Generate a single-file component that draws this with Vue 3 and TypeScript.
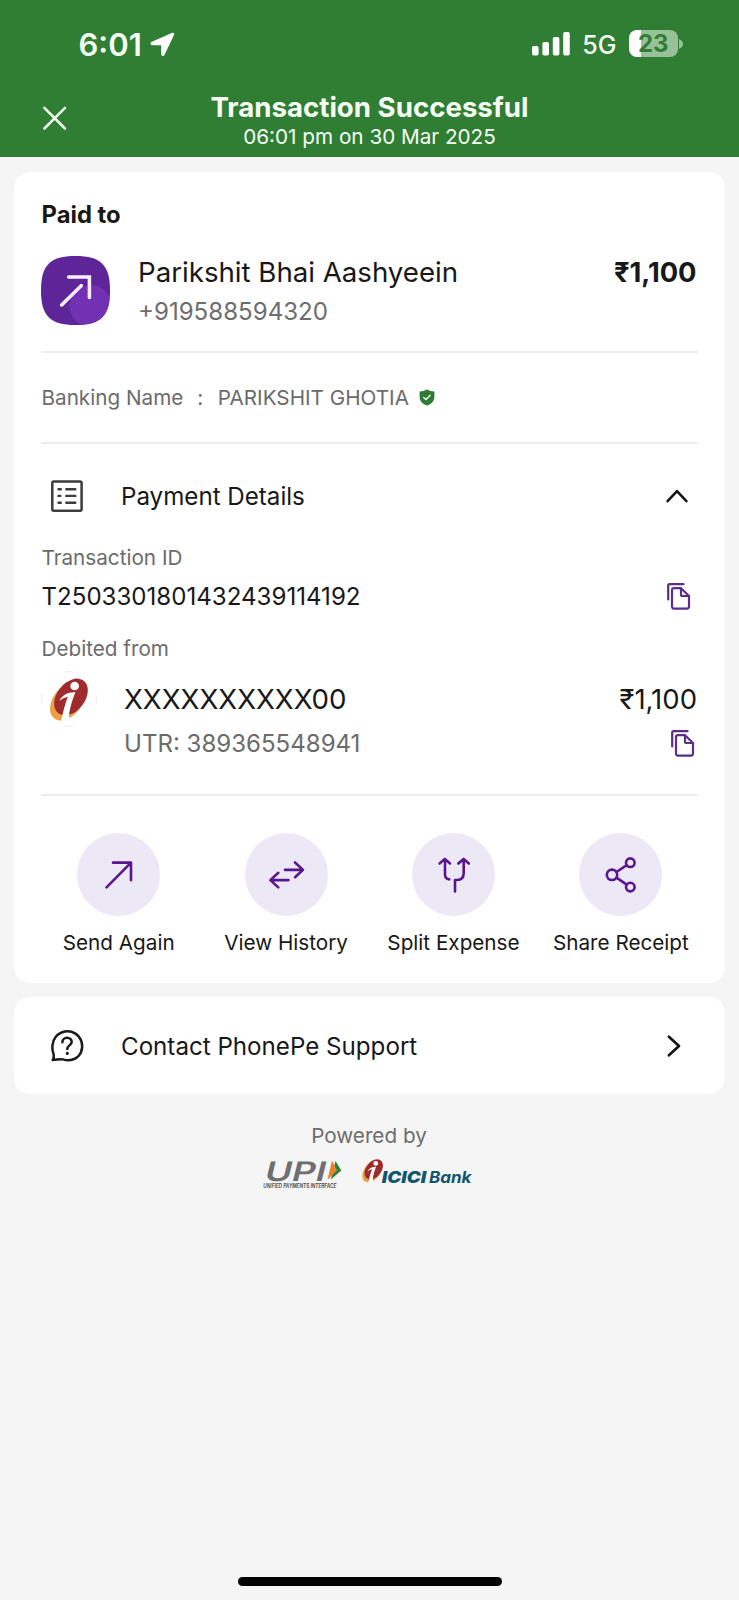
<script setup lang="ts">
type ActionIcon = 'send' | 'history' | 'split' | 'share'

interface Action {
  label: string
  icon: ActionIcon
}

const actions: Action[] = [
  { label: 'Send Again', icon: 'send' },
  { label: 'View History', icon: 'history' },
  { label: 'Split Expense', icon: 'split' },
  { label: 'Share Receipt', icon: 'share' },
]

const payment = {
  payee: 'Parikshit Bhai Aashyeein',
  phone: '+919588594320',
  amount: '₹1,100',
  bankingName: 'PARIKSHIT GHOTIA',
  transactionId: 'T2503301801432439114192',
  account: 'XXXXXXXXXX00',
  utr: '389365548941',
}
</script>

<template>
  <div class="screen">
    <svg class="defs" width="0" height="0" aria-hidden="true">
      <defs>
        <g id="bank-mark">
          <ellipse cx="204" cy="722" rx="43" ry="66" transform="rotate(38 204 722)" fill="#ec9f43" />
          <ellipse cx="214" cy="710" rx="42" ry="62" transform="rotate(38 214 710)" fill="#9f2b2c" />
          <path d="M179 721C188 705 204 695 227 696C220 716 210 740 208 769L213 784H184C190 756 197 726 205 709C196 711 187 715 179 721Z" fill="#fff" />
          <circle cx="225" cy="677" r="13" fill="#fff" />
        </g>
        <g id="copy-mark" fill="none" stroke="#5b2d8c" stroke-width="2.200" stroke-linecap="round" stroke-linejoin="round">
          <path d="M1.200 16.500V2.600Q1.200 1.200 2.600 1.200H16.500" />
          <path d="M7 5.200H14L22 13V23.600Q22 25.600 20 25.600H7Q5 25.600 5 23.600V7.200Q5 5.200 7 5.200Z" />
          <path d="M14 5.600V11.400Q14 13 15.600 13H21.600" />
        </g>
      </defs>
    </svg>

    <header class="header">
      <div class="status">
        <span class="clock">6:01</span>
        <svg class="location" width="25" height="25" viewBox="0 0 25 25">
          <path d="M22.600 1.600L1.600 10.700Q.8 12 2.200 12.500H11.200Q12 12.500 12 13.300V22.400Q12.600 23.900 13.800 22.600L23.400 2.400Q23.500 1.400 22.600 1.600Z" fill="#fff" stroke="#fff" stroke-width="1.600" stroke-linejoin="round" />
        </svg>
        <svg class="signal" width="38" height="24" viewBox="0 0 38 24" fill="#fff">
          <rect x="0" y="14" width="6.600" height="9.600" rx="1.800" />
          <rect x="10.400" y="10" width="6.600" height="13.600" rx="1.800" />
          <rect x="20.800" y="5" width="6.600" height="18.600" rx="1.800" />
          <rect x="31.200" y="0" width="6.600" height="23.600" rx="1.800" />
        </svg>
        <span class="network">5G</span>
        <div class="battery"><span>23</span></div>
        <svg class="nub" width="4" height="10" viewBox="0 0 4 10"><path d="M0 0Q4 2 4 5T0 10Z" fill="#98c19a" /></svg>
      </div>
      <div class="titlebar">
        <svg class="close" width="26" height="26" viewBox="0 0 26 26">
          <path d="M2.400 2.900L23 23.500M23 2.900L2.400 23.500" stroke="#f2fff0" stroke-width="2.500" stroke-linecap="round" />
        </svg>
        <div class="titles">
          <h1>Transaction Successful</h1>
          <p>06:01 pm on 30 Mar 2025</p>
        </div>
      </div>
    </header>

    <main>
      <section class="card receipt">
        <h2>Paid to</h2>
        <div class="payee">
          <svg class="avatar" width="69" height="69" viewBox="0 0 69 69">
            <defs>
              <clipPath id="squircle"><path d="M34.500 0C60 0 69 9 69 34.500S60 69 34.500 69S0 60 0 34.500S9 0 34.500 0Z" /></clipPath>
            </defs>
            <g clip-path="url(#squircle)">
              <rect width="69" height="69" fill="#5e2599" />
              <circle cx="49.500" cy="50" r="21" fill="#7131b2" />
            </g>
            <path d="M27.600 21H48.400V41.600M40.400 29.600L20.600 49" fill="none" stroke="#fbeefd" stroke-width="3.500" stroke-linecap="round" />
          </svg>
          <div class="who">
            <div class="name">{{ payment.payee }}</div>
            <div class="phone">{{ payment.phone }}</div>
          </div>
          <strong class="total">{{ payment.amount }}</strong>
        </div>

        <div class="banking">
          <span>Banking Name</span><span class="colon">:</span><span class="holder">{{ payment.bankingName }}</span>
          <svg width="16" height="17" viewBox="0 0 16 17">
            <path d="M8 .4Q11.300 2.400 15.400 2.400V7.800C15.400 12.400 12 15.400 8 16.600C4 15.400.6 12.400.6 7.800V2.400Q4.700 2.400 8 .4Z" fill="#2f7b35" />
            <path d="M4.700 8.400L7 10.500L11.200 6.300" fill="none" stroke="#fff" stroke-width="1.300" stroke-linecap="round" stroke-linejoin="round" />
          </svg>
        </div>

        <div class="details-head">
          <svg class="list" width="32" height="32" viewBox="0 0 32 32" fill="none" stroke="#3c3c3c" stroke-width="2.400" stroke-linecap="round">
            <rect x="1.300" y="1.400" width="29.300" height="29.300" rx="1.500" stroke-width="2.500" />
            <path d="M7.500 9.200H9.800M15.300 9.200H24.300M7.500 15.900H9.300M15.300 15.900H24.300M7.500 22.700H9.800M15.300 22.700H24.300" />
          </svg>
          <span>Payment Details</span>
          <svg class="up" width="22" height="14" viewBox="0 0 22 14"><path d="M1.600 12.200L11 2.200L20.400 12.200" fill="none" stroke="#151515" stroke-width="2.600" stroke-linecap="round" stroke-linejoin="round" /></svg>
        </div>

        <div class="label">Transaction ID</div>
        <div class="txn">
          <span>{{ payment.transactionId }}</span>
          <svg width="24" height="27" viewBox="0 0 24 27"><use href="#copy-mark" /></svg>
        </div>
        <div class="label debited">Debited from</div>
        <div class="account">
          <svg class="bank" width="56" height="56" viewBox="124 632 168 168">
            <circle cx="208" cy="716" r="82" fill="none" stroke="#e4e4e4" stroke-width="2.500" stroke-dasharray="26 102.800" stroke-dashoffset="13" />
            <use href="#bank-mark" />
          </svg>
          <div class="account-lines">
            <div class="number"><span>{{ payment.account }}</span><span class="debit">{{ payment.amount }}</span></div>
            <div class="utr">
              <span>UTR: {{ payment.utr }}</span>
              <svg width="24" height="27" viewBox="0 0 24 27"><use href="#copy-mark" /></svg>
            </div>
          </div>
        </div>

        <nav class="actions">
          <div v-for="a in actions" :key="a.icon" class="action">
            <div class="disc">
              <svg width="83" height="83" viewBox="0 0 83 83" fill="none" stroke="#59168f" stroke-width="2.600" stroke-linecap="round" stroke-linejoin="round">
                <path v-if="a.icon === 'send'" d="M36 29.600H54V47.200M54 29.600L29.500 54.400" />
                <path v-else-if="a.icon === 'history'" d="M40 36.900H57.600M50 29.500L58 36.900L50 44.200M43.500 47.100H26M33.300 39.800L25.400 47.100L33.300 54.400" />
                <path v-else-if="a.icon === 'split'" d="M27.600 30.500L32.800 25.900L38 30.500M33 26.500V41.500Q33 45.900 37.300 46.400M46.300 30.500L51.600 25.900L56.800 30.500M51.700 26.500V40Q51.700 46.800 45.200 47H43V58.400" />
                <g v-else>
                  <circle cx="33" cy="41.800" r="5.200" /><circle cx="51.300" cy="29.700" r="4.300" /><circle cx="51.300" cy="54.100" r="4.300" />
                  <path d="M37.500 39L47.700 32.100M37.500 44.700L47.700 51.600" />
                </g>
              </svg>
            </div>
            <span>{{ a.label }}</span>
          </div>
        </nav>
      </section>

      <section class="card support">
        <svg width="34" height="34" viewBox="0 0 34 34" fill="none" stroke="#1a1a1a" stroke-width="2.500" stroke-linecap="round" stroke-linejoin="round">
          <path d="M2.700 31Q4.200 28.900 3.700 25.500C1.300 20 2 12.500 5.800 7.800C10.500 2.200 19 .6 25 4.400C31.500 8.400 34 16.500 30.900 23.500C28 29.800 20 33 12.900 30.400Q10.500 29.700 2.700 31Z" />
          <path d="M12.400 13.200C12.400 10.700 14.300 8.800 17 8.800C19.700 8.800 21.700 10.600 21.700 13C21.700 16.200 17.300 16.600 17.300 19.900" />
          <path d="M17.300 24.200V24.400" stroke-width="3" />
        </svg>
        <span>Contact PhonePe Support</span>
        <svg class="next" width="14" height="22" viewBox="0 0 14 22"><path d="M1.900 1.700L12 11L1.900 20.300" fill="none" stroke="#151515" stroke-width="2.700" stroke-linecap="round" stroke-linejoin="round" /></svg>
      </section>
    </main>

    <footer>
      <p>Powered by</p>
      <div class="brands">
        <svg width="80" height="31" viewBox="0 0 80 31">
          <path d="M72.500 2L78.300 11.500L67.800 20.500Z" fill="#23863f" />
          <path d="M69 1.500L74 11.500L64.500 20.800Z" fill="#ee7f2d" />
          <text class="upi" x="0" y="0" transform="translate(.3 21.500) skewX(-14)" textLength="61" lengthAdjust="spacingAndGlyphs">UPI</text>
          <text class="upi-sub" x=".3" y="28.500" textLength="73" lengthAdjust="spacingAndGlyphs">UNIFIED PAYMENTS INTERFACE</text>
        </svg>
        <svg class="icici" width="112" height="31" viewBox="0 0 112 31">
          <use href="#bank-mark" transform="translate(-26.200 -118.800) scale(.182)" />
          <text class="icici-name" x="20.700" y="23.500" textLength="44.500" lengthAdjust="spacingAndGlyphs">ICICI</text>
          <text class="icici-name bank-word" x="68" y="23.500" textLength="42.500" lengthAdjust="spacingAndGlyphs">Bank</text>
        </svg>
      </div>
    </footer>
    <div class="home"></div>
  </div>
</template>

<style>
html,
body {
  margin: 0;
  background: #f5f5f5;
}
</style>

<style scoped>
.screen {
  display: flex;
  flex-direction: column;
  width: 739px;
  height: 1600px;
  overflow: hidden;
  background: #f5f5f5;
  color: #181818;
  font-family: Inter, 'Liberation Sans', sans-serif;
}

.screen svg {
  display: block;
  flex: none;
  overflow: visible;
}

.screen .defs {
  position: absolute;
}

h1,
h2,
p {
  margin: 0;
}

.header {
  height: 157px;
  flex: none;
  background: #307d34;
  color: #f6fff4;
}

.status {
  display: flex;
  align-items: center;
  height: 88px;
  padding-left: 78.500px;
}

.clock {
  width: 71px;
  font-size: 31px;
  font-weight: 600;
}

.signal {
  margin-left: 357.800px;
}

.network {
  width: 46.500px;
  margin: 2px 0 0 12px;
  font-size: 25px;
  font-weight: 500;
}

.battery {
  box-sizing: border-box;
  width: 49px;
  height: 27px;
  margin-top: -1px;
  border-radius: 8px;
  background: linear-gradient(90deg, #fff 0 12px, #98c19a 12px);
  color: #307d34;
  font-size: 24px;
  font-weight: 700;
  line-height: 27px;
  text-align: center;
}

.nub {
  margin-left: 1px;
}

.titlebar {
  display: grid;
  grid-template-columns: 110px 1fr 110px;
}

.close {
  margin: 17px 0 0 42px;
}

.titles {
  padding-top: 2px;
  text-align: center;
  white-space: nowrap;
}

h1 {
  font-size: 27.650px;
  font-weight: 700;
  line-height: 34px;
}

.titles p {
  font-size: 20.700px;
  line-height: 25px;
}

main {
  display: flex;
  flex-direction: column;
  gap: 14px;
  padding: 15px 14px 0;
}

.card {
  box-sizing: border-box;
  border-radius: 16px;
  background: #fff;
}

.receipt {
  height: 811px;
  padding: 29px 27.500px 0 27px;
}

h2 {
  margin-left: .600px;
  font-size: 23.800px;
  font-weight: 700;
  line-height: 28px;
}

.payee {
  display: flex;
  align-items: flex-start;
  height: 96px;
  margin-top: 26px;
  border-bottom: 2px solid #eeeeee;
}

.avatar {
  margin-top: 1px;
}

.who {
  flex: 1;
  margin-left: 28px;
}

.name,
.total {
  font-size: 27.650px;
  line-height: 34px;
}

.total {
  margin: 1px 1px 0 0;
  font-size: 27.300px;
  font-weight: 700;
}

.phone {
  margin-top: 8px;
  color: #6d6d6d;
  font-size: 24.100px;
  line-height: 30px;
}

.banking {
  display: flex;
  align-items: center;
  height: 89px;
  padding-left: .500px;
  border-bottom: 2px solid #eeeeee;
  color: #6b6b6b;
  font-size: 20.700px;
}

.colon {
  margin: 0 14.500px 0 14px;
}

.banking svg {
  margin-left: 10px;
}

.details-head {
  display: flex;
  align-items: center;
  height: 100px;
  margin-top: 2px;
  font-size: 24.150px;
}

.list {
  margin: -1px 38px 0 10px;
}

.up {
  margin: 0 9.500px 0 auto;
}

.label {
  margin-top: -1px;
  padding-left: .500px;
  color: #6b6b6b;
  font-size: 20.700px;
  line-height: 26px;
}

.txn {
  display: flex;
  align-items: center;
  justify-content: space-between;
  height: 30px;
  margin-top: 10px;
  padding: 0 6.500px 0 .500px;
  font-size: 24.100px;
}

.debited {
  margin-top: 25px;
}

.account {
  display: flex;
  height: 123px;
  margin-top: 9px;
  border-bottom: 2px solid #eeeeee;
}

.account-lines {
  flex: 1;
  margin: 11px 0 0 27px;
}

.number,
.utr {
  display: flex;
  align-items: center;
  justify-content: space-between;
}

.number {
  height: 34px;
  font-size: 27.650px;
}

.debit {
  margin-right: .500px;
  font-size: 27.500px;
}

.utr {
  height: 30px;
  margin-top: 12px;
  padding-right: 3px;
  color: #6b6b6b;
  font-size: 24.050px;
}

.actions {
  display: grid;
  grid-template-columns: repeat(4, 167.400px);
  margin: 37px -8px 0 -6px;
}

.action {
  display: flex;
  flex-direction: column;
  align-items: center;
  font-size: 20.700px;
  line-height: 26px;
  white-space: nowrap;
}

.disc {
  width: 83px;
  height: 83px;
  margin-bottom: 14px;
  border-radius: 50%;
  background: #ede8f6;
}

.support {
  display: flex;
  align-items: center;
  height: 97px;
  padding: 0 44.500px 0 36px;
  font-size: 24.150px;
}

.support span {
  margin: 1px 0 0 37px;
}

.next {
  margin-left: auto;
}

footer {
  display: flex;
  flex-direction: column;
  align-items: center;
  padding: 29px 1px 0 0;
}

footer p {
  color: #6d6d6d;
  font-size: 20.700px;
  line-height: 26px;
}

.brands {
  display: flex;
  margin: 10px 2px 0 0;
}

.icici {
  margin-left: 18px;
}

.upi {
  fill: #6f6f72;
  font-size: 27px;
  font-weight: 600;
}

.upi-sub {
  fill: #444;
  font-size: 5.600px;
  font-style: italic;
  font-weight: 600;
}

.icici-name {
  fill: #12566e;
  font-size: 16.500px;
  font-style: italic;
  font-weight: 900;
}

.bank-word {
  font-weight: 700;
}

.home {
  width: 264px;
  height: 9px;
  margin: auto auto 14px;
  border-radius: 5px;
  background: #000;
}
</style>
